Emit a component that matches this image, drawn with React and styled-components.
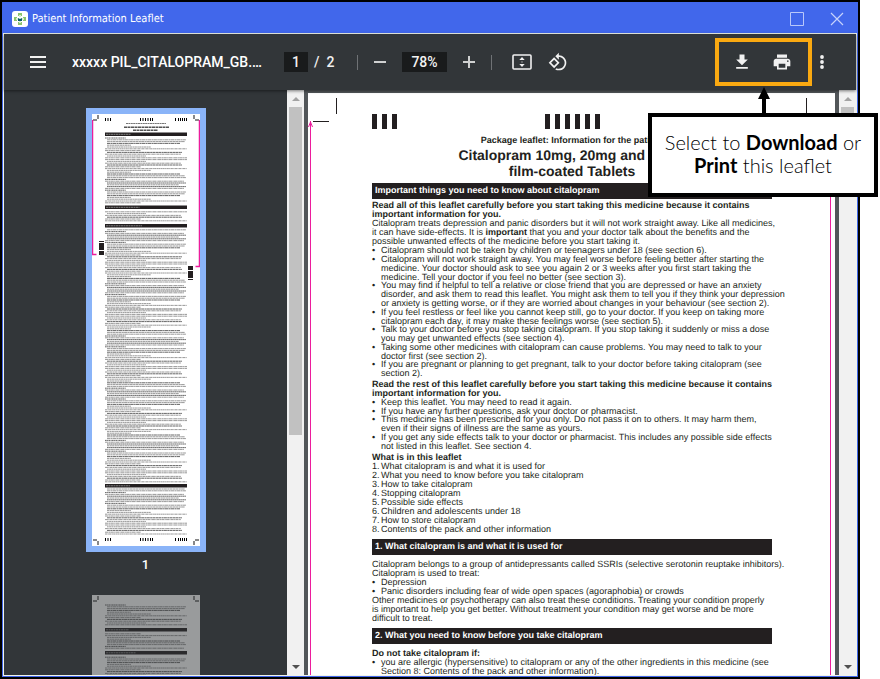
import React from 'react'
import styled, { createGlobalStyle } from 'styled-components'

const colors = {
    frame: '#4167eb',
    toolbar: '#323639',
    field: '#191b1c',
    viewer: '#525659',
    ink: '#231f20',
    pink: '#ec1c9c',
    selected: '#8ab4f8',
    highlight: '#faa911',
}

const GlobalStyle = createGlobalStyle`
    * {
        box-sizing: border-box;
    }
    body {
        margin: 0;
        background: white;
        overflow: hidden;
    }
    button, input {
        font: inherit;
        color: inherit;
    }
`
const Screen = styled.div`
    position: relative;
    padding-right: 20px;
`
const Window = styled.div`
    display: flex;
    flex-direction: column;
    height: 100vh;
    padding: 0 1px 1px;
    border: 2px solid black;
    background: ${colors.frame};
`
const TitleBar = styled.header`
    flex: none;
    display: flex;
    align-items: center;
    gap: 4px;
    height: 31px;
    padding: 2px 10px 0 9px;
    color: white;
    font-family: Tahoma, 'DejaVu Sans Condensed', 'Noto Sans', sans-serif;
`
const WindowTitle = styled.h1`
    flex: 1;
    margin: 0;
    font-size: 11px;
    font-weight: 400;
    line-height: 16px;
    text-rendering: geometricPrecision;
`
const WindowButton = styled.button`
    display: grid;
    place-items: center;
    width: 20px;
    height: 20px;
    margin-left: 16px;
    padding: 0;
    border: 0;
    background: none;
`
const Viewer = styled.div`
    flex: 1;
    min-height: 0;
    display: flex;
    flex-direction: column;
    border: 1px solid #f0f4ea;
    background: ${colors.viewer};
`
const Toolbar = styled.div`
    flex: none;
    display: flex;
    align-items: center;
    height: 56px;
    background: ${colors.toolbar};
    color: #f1f1f1;
    font-family: Roboto, sans-serif;
    font-size: 14px;
    font-weight: 500;
    box-shadow: 0 1px 3px rgba(0, 0, 0, 0.5);
    z-index: 1;
`
const ToolbarStart = styled.div`
    flex: 1;
    min-width: 0;
    display: flex;
    align-items: center;
    gap: 18px;
    padding: 0 16px 0 18px;
`
const FileName = styled.span`
    overflow: hidden;
    white-space: nowrap;
    text-overflow: ellipsis;
    color: white;
`
const ToolbarCenter = styled.div`
    flex: none;
    display: flex;
    align-items: center;
    gap: 6px;
    padding-right: 12px;
`
const ToolbarEnd = styled.div`
    flex: 1;
    display: flex;
    align-items: center;
    justify-content: flex-end;
    padding-right: 24px;
`
const IconButton = styled.button`
    flex: none;
    display: grid;
    place-items: center;
    width: ${(props) => props.$width || 32}px;
    height: 32px;
    padding: 0;
    border: 0;
    background: none;
`
const Field = styled.input`
    width: ${(props) => props.$width}px;
    height: 20px;
    padding: 0;
    border: 0;
    background: ${colors.field};
    text-align: center;
`
const PageCount = styled.span`
    display: flex;
    gap: 7px;
    width: 37px;
`
const Divider = styled.span`
    width: 1px;
    height: 15px;
    background: #6f7275;
`
const FitGroup = styled.div`
    display: flex;
    gap: 4px;
    padding-left: 8px;
`
const HighlightedActions = styled.div`
    display: flex;
    align-items: center;
    height: 48px;
    padding: 0 6px 0 3px;
    border: 4px solid ${colors.highlight};
`
const Panes = styled.div`
    flex: 1;
    min-height: 0;
    display: flex;
`
const Sidebar = styled.nav`
    flex: none;
    display: flex;
    flex-direction: column;
    align-items: center;
    width: 283px;
    padding-top: 18px;
    overflow: hidden;
    background: ${colors.toolbar};
`
const ThumbButton = styled.button`
    flex: none;
    display: block;
    padding: 0;
    border: 6px solid ${(props) => (props.$selected ? colors.selected : 'transparent')};
    background: none;

    svg {
        display: block;
        opacity: ${(props) => (props.$selected ? 1 : 0.5)};
    }
`
const ThumbLabel = styled.span`
    flex: none;
    height: 37px;
    color: white;
    font-family: Roboto, sans-serif;
    font-size: 13px;
    font-weight: 500;
    line-height: 26px;
`
const ScrollTrack = styled.div`
    flex: none;
    display: flex;
    flex-direction: column;
    align-items: center;
    width: 17px;
    background: #f1f1f1;
`
const ScrollArrow = styled.button`
    display: grid;
    place-items: center;
    width: 17px;
    height: 17px;
    padding: 0;
    border: 0;
    background: none;
`
const ScrollThumb = styled.div`
    width: 13px;
    height: ${(props) => props.$size}%;
    margin-bottom: auto;
    background: #c1c1c1;
`
const PageArea = styled.main`
    flex: 1;
    min-width: 0;
    display: flex;
    padding: 3px 4px 0;
    overflow: hidden;
`
const Page = styled.article`
    position: relative;
    flex: 1;
    min-width: 0;
    padding: 21px 63px 0 64px;
    overflow: hidden;
    background: white;
    color: ${colors.ink};
    font-family: 'Liberation Sans', Arial, sans-serif;
    font-size: 9px;
    line-height: 9px;
    white-space: nowrap;
    text-rendering: geometricPrecision;
`
const PrintMarks = styled.svg`
    position: absolute;
    top: 0;
    left: ${(props) => (props.$right ? 'auto' : 0)};
    right: ${(props) => (props.$right ? 0 : 'auto')};
    transform: ${(props) => (props.$right ? 'scaleX(-1)' : 'none')};
`
const BarRow = styled.div`
    display: flex;
    justify-content: space-between;
    height: 15px;
`
const BarGroup = styled.div`
    display: flex;
    gap: 5px;
`
const Bar = styled.span`
    width: 5px;
    background: ${colors.ink};
`
const LeafletHeading = styled.header`
    padding: 5px 0 4px;
    text-align: center;
    font-weight: 700;
`
const LeafletKind = styled.p`
    margin: 0;
    line-height: 13px;
`
const LeafletTitle = styled.h2`
    margin: 0;
    font-size: 14px;
    line-height: 16px;
`
const SectionBar = styled.h3`
    height: 16px;
    margin: 0 0 ${(props) => props.$after}px;
    padding-left: 3px;
    background: ${colors.ink};
    color: white;
    font-size: 9px;
    line-height: 15px;
`
const Section = styled.section`
    margin-bottom: 5px;
`
const Paragraph = styled.p`
    margin: 0;
`
const SubHeading = styled.h4`
    margin: 0;
    font-size: 9px;

    * + & {
        margin-top: 2px;
    }
`
const List = styled.ul`
    margin: 0;
    padding: 0;
    list-style: none;
`
const ListItem = styled.li`
    display: grid;
    grid-template-columns: 9px 1fr;

    ul > &:nth-child(odd):not(:first-child) {
        margin-top: -1px;
    }
`
const Marker = styled.span`
    font-weight: ${(props) => (props.$bullet ? 700 : 400)};
`
const Callout = styled.aside`
    position: absolute;
    top: 113px;
    right: 2px;
    width: 230px;
    height: 84px;
    padding: 14px 0;
    border: 4px solid black;
    background: white;
    color: black;
    font-family: 'Century Gothic', Lato, sans-serif;
    font-size: 20px;
    font-weight: 300;
    line-height: 23px;
    text-align: center;
    z-index: 2;

    b {
        font-weight: 700;
    }
`
const CalloutArrow = styled.svg`
    position: absolute;
    bottom: 100%;
    left: 106px;
`

const advice = [
    ['Citalopram should not be taken by children or teenagers under 18 (see section 6).'],
    [
        'Citalopram will not work straight away. You may feel worse before feeling better after starting the',
        'medicine. Your doctor should ask to see you again 2 or 3 weeks after you first start taking the',
        'medicine. Tell your doctor if you feel no better (see section 3).',
    ],
    [
        'You may find it helpful to tell a relative or close friend that you are depressed or have an anxiety',
        'disorder, and ask them to read this leaflet. You might ask them to tell you if they think your depression',
        'or anxiety is getting worse, or if they are worried about changes in your behaviour (see section 2).',
    ],
    [
        'If you feel restless or feel like you cannot keep still, go to your doctor. If you keep on taking more',
        'citalopram each day, it may make these feelings worse (see section 5).',
    ],
    [
        'Talk to your doctor before you stop taking citalopram. If you stop taking it suddenly or miss a dose',
        'you may get unwanted effects (see section 4).',
    ],
    [
        'Taking some other medicines with citalopram can cause problems. You may need to talk to your',
        'doctor first (see section 2).',
    ],
    [
        'If you are pregnant or planning to get pregnant, talk to your doctor before taking citalopram (see',
        'section 2).',
    ],
]

const reminders = [
    ['Keep this leaflet. You may need to read it again.'],
    ['If you have any further questions, ask your doctor or pharmacist.'],
    [
        'This medicine has been prescribed for you only. Do not pass it on to others. It may harm them,',
        'even if their signs of illness are the same as yours.',
    ],
    [
        'If you get any side effects talk to your doctor or pharmacist. This includes any possible side effects',
        'not listed in this leaflet. See section 4.',
    ],
]

const contents = [
    ['What citalopram is and what it is used for'],
    ['What you need to know before you take citalopram'],
    ['How to take citalopram'],
    ['Stopping citalopram'],
    ['Possible side effects'],
    ['Children and adolescents under 18'],
    ['How to store citalopram'],
    ['Contents of the pack and other information'],
]

const uses = [
    ['Depression'],
    ['Panic disorders including fear of wide open spaces (agoraphobia) or crowds'],
]

const warnings = [
    [
        'you are allergic (hypersensitive) to citalopram or any of the other ingredients in this medicine (see',
        'Section 8: Contents of the pack and other information).',
    ],
]

function Lines({ lines }) {
    return lines.map((line, index) => (
        <React.Fragment key={line}>
            {index > 0 && <br />}
            {line}
        </React.Fragment>
    ))
}

function LeafletList({ items, ordered }) {
    return (
        <List as={ordered ? 'ol' : 'ul'}>
            {items.map((lines, index) => (
                <ListItem key={lines[0]}>
                    <Marker $bullet={!ordered}>{ordered ? `${index + 1}.` : '•'}</Marker>
                    <span>
                        <Lines lines={lines} />
                    </span>
                </ListItem>
            ))}
        </List>
    )
}

function Bars({ count }) {
    return (
        <BarGroup>
            {Array.from({ length: count }, (_, index) => (
                <Bar key={index} />
            ))}
        </BarGroup>
    )
}

function Marks({ right }) {
    return (
        <PrintMarks $right={right} width="40" height="600" aria-hidden="true">
            <path d="M28.5 5v16M5 28.5h16" stroke={colors.ink} fill="none" />
            <path
                d={right ? 'M4.5 28v572' : 'M2.5 28v572M.5 34l2-5 2 5'}
                stroke={colors.pink}
                fill="none"
            />
        </PrintMarks>
    )
}

function Scrollbar({ size, label }) {
    return (
        <ScrollTrack>
            <ScrollArrow aria-label={`Scroll ${label} up`}>
                <svg width="8" height="4">
                    <path d="M0 4l4-4 4 4z" fill="#a3a3a3" />
                </svg>
            </ScrollArrow>
            <ScrollThumb $size={size} />
            <ScrollArrow aria-label={`Scroll ${label} down`}>
                <svg width="8" height="4">
                    <path d="M0 0l4 4 4-4z" fill="#505050" />
                </svg>
            </ScrollArrow>
        </ScrollTrack>
    )
}

// Miniature of a leaflet page: body copy as dashed strokes, section bars in black
function Thumbnail({ bars, marks, start }) {
    const rows = []
    for (let row = 0; start + row * 1.8 < 421; row++) {
        const y = start + row * 1.8
        if (bars.some((bar) => y > bar - 2 && y < bar + 5)) continue
        const seed = (row * 37 + row * row * 11) % 29
        const short = seed % 5 === 0
        const indent = seed % 3 === 0 ? 0 : 2
        rows.push(
            <line
                key={row}
                x1={13 + indent}
                x2={short ? 34 + seed : 95 - (seed % 9)}
                y1={y}
                y2={y}
                stroke={seed % 7 === 0 ? '#555' : '#8c8c8c'}
                strokeWidth=".9"
                strokeDasharray={`${1.7 + (seed % 4) * 0.6} .4 ${1.1 + (seed % 3) * 0.5} .3`}
            />
        )
    }
    const groups = [13, 15.5, 18, 48, 50.5, 53, 55.5, 58, 60, 83, 86, 88, 90, 92, 94]

    return (
        <svg width="108" height="432" viewBox="0 0 108 432" aria-hidden="true">
            <rect width="108" height="432" fill="white" />
            {rows}
            {bars.map((y) => (
                <g key={y}>
                    <rect x="13" y={y} width="82" height="3.5" fill={colors.ink} />
                    <path d={`M14 ${y + 1.8}h${22 + (y % 16)}`} stroke="#999" strokeWidth=".8" strokeDasharray="2 .5" />
                </g>
            ))}
            <path
                d="M6 1v4M1 6h4M102 1v4M103 6h4M6 431v-4M1 426h4M102 431v-4M103 426h4"
                stroke="#888"
                strokeWidth="2"
            />
            {marks && (
                <>
                    <path d="M34 9.500h40" stroke="#777" strokeDasharray="2 .4" />
                    <path d="M32 13.300h45M41 16.300h25" stroke="#555" strokeWidth="1.600" strokeDasharray="3 .5" />
                    {groups.map((x) => (
                        <rect key={x} x={x} y="4" width="1" height="3" fill="black" />
                    ))}
                    {groups.map((x) => (
                        <rect key={x} x={x} y="424" width="1" height="3" fill="black" />
                    ))}
                    <path d="M7 127h5v1H7zM7 129h5v7H7zM7 137h5v4H7z" fill={colors.ink} />
                    <path d="M96 152h5v4h-5zM96 157h5v7h-5zM96 165h5v1h-5z" fill={colors.ink} />
                    <path d="M.5 6v134.500h4M107.500 6v146.500h-4" stroke={colors.pink} strokeWidth="1.500" fill="none" />
                </>
            )}
        </svg>
    )
}

function Logo() {
    return (
        <svg width="16" height="16" viewBox="0 0 16 16" aria-hidden="true">
            <rect width="16" height="16" rx="3" fill="white" />
            <path d="M6 2h4v3H6zM6 11h4v3H6zM2 6h3v4H2zM11 6h3v4h-3z" fill="#8cc56f" />
            <path d="M7 4h2v2H7zM7 10h2v2H7zM4 7h2v2H4zM10 7h2v2h-2z" fill="#d9edcf" />
            <path d="M6 7l2 1 2-1v3H6z" fill="#0b5c66" />
        </svg>
    )
}

function App() {
    return (
        <Screen>
            <GlobalStyle />
            <Window>
                <TitleBar>
                    <Logo />
                    <WindowTitle>Patient Information Leaflet</WindowTitle>
                    <WindowButton aria-label="Maximise">
                        <svg width="14" height="14" fill="none" stroke="#b9c8fa">
                            <path d="M.5.5h13v13H.5z" />
                        </svg>
                    </WindowButton>
                    <WindowButton aria-label="Close">
                        <svg width="14" height="14" fill="none" stroke="#c6d2fb" strokeWidth="1.200">
                            <path d="M1 1l12 12M13 1L1 13" />
                        </svg>
                    </WindowButton>
                </TitleBar>
                <Viewer>
                    <Toolbar>
                        <ToolbarStart>
                            <IconButton aria-label="Menu">
                                <svg width="16" height="12" fill="#f1f1f1">
                                    <path d="M0 0h16v2H0zM0 5h16v2H0zM0 10h16v2H0z" />
                                </svg>
                            </IconButton>
                            <FileName>xxxxx PIL_CITALOPRAM_GB.…</FileName>
                        </ToolbarStart>
                        <ToolbarCenter>
                            <Field $width={24} aria-label="Page number" defaultValue="1" />
                            <PageCount>
                                <span>/</span>
                                <span>2</span>
                            </PageCount>
                            <Divider />
                            <IconButton aria-label="Zoom out">
                                <svg width="12" height="2" fill="#d0d1d1">
                                    <path d="M0 0h12v2H0z" />
                                </svg>
                            </IconButton>
                            <Field $width={45} aria-label="Zoom level" defaultValue="78%" />
                            <IconButton aria-label="Zoom in">
                                <svg width="12" height="12" fill="#d0d1d1">
                                    <path d="M5 0h2v5h5v2H7v5H5V7H0V5h5z" />
                                </svg>
                            </IconButton>
                            <Divider />
                            <FitGroup>
                                <IconButton aria-label="Fit to page">
                                    <svg width="20" height="16" viewBox="0 0 20 16" fill="#f1f1f1">
                                        <rect x="1" y="1" width="18" height="14" rx="1" fill="none" stroke="#f1f1f1" strokeWidth="1.600" />
                                        <path d="M10 3l2.700 3H7.300zM10 13l2.700-3H7.300zM9.500 7.500h1v1h-1z" />
                                    </svg>
                                </IconButton>
                                <IconButton aria-label="Rotate counterclockwise">
                                    <svg width="20" height="20" viewBox="0 0 24 24" fill="#f1f1f1">
                                        <path d="M7.340 6.410L.860 12.900l6.490 6.480 6.490-6.480-6.500-6.490zM3.690 12.900l3.660-3.660L11 12.900l-3.660 3.660-3.650-3.660zm15.670-6.260C17.610 4.880 15.300 4 13 4V.760L8.760 5 13 9.240V6c1.790 0 3.580.680 4.950 2.050 2.730 2.730 2.730 7.170 0 9.900C16.580 19.320 14.790 20 13 20c-.970 0-1.940-.210-2.840-.610l-1.490 1.490C10.020 21.620 11.510 22 13 22c2.300 0 4.610-.880 6.360-2.640 3.520-3.510 3.520-9.210 0-12.720z" />
                                    </svg>
                                </IconButton>
                            </FitGroup>
                        </ToolbarCenter>
                        <ToolbarEnd>
                            <HighlightedActions>
                                <IconButton $width={40} aria-label="Download">
                                    <svg width="20" height="20" viewBox="0 0 24 24" fill="#f1f1f1">
                                        <path d="M19 9h-4V3H9v6H5l7 7 7-7zM5 18v2h14v-2H5z" />
                                    </svg>
                                </IconButton>
                                <IconButton $width={40} aria-label="Print">
                                    <svg width="20" height="20" viewBox="0 0 24 24" fill="#f1f1f1">
                                        <path d="M19 8H5c-1.660 0-3 1.340-3 3v6h4v4h12v-4h4v-6c0-1.660-1.340-3-3-3zm-3 11H8v-5h8v5zm3-7c-.550 0-1-.450-1-1s.450-1 1-1 1 .450 1 1-.450 1-1 1zm-1-9H6v4h12V3z" />
                                    </svg>
                                </IconButton>
                            </HighlightedActions>
                            <IconButton $width={20} aria-label="More actions">
                                <svg width="4" height="16" fill="#f1f1f1">
                                    <circle cx="2" cy="3" r="1.900" />
                                    <circle cx="2" cy="8" r="1.900" />
                                    <circle cx="2" cy="13" r="1.900" />
                                </svg>
                            </IconButton>
                        </ToolbarEnd>
                    </Toolbar>
                    <Panes>
                        <Sidebar aria-label="Pages">
                            <ThumbButton $selected aria-label="Page 1">
                                <Thumbnail bars={[18.5, 91.5, 110, 370]} start={24} marks />
                            </ThumbButton>
                            <ThumbLabel>1</ThumbLabel>
                            <ThumbButton aria-label="Page 2">
                                <Thumbnail bars={[33, 56]} start={10} />
                            </ThumbButton>
                        </Sidebar>
                        <Scrollbar size={56} label="pages" />
                        <PageArea>
                            <Page>
                                <Marks />
                                <Marks right />
                                <BarRow>
                                    <Bars count={3} />
                                    <Bars count={6} />
                                    <Bars count={3} />
                                </BarRow>
                                <LeafletHeading>
                                    <LeafletKind>Package leaflet: Information for the patient</LeafletKind>
                                    <LeafletTitle>
                                        Citalopram 10mg, 20mg and 40mg
                                        <br />
                                        film-coated Tablets
                                    </LeafletTitle>
                                </LeafletHeading>
                                <Section>
                                    <SectionBar $after={2}>Important things you need to know about citalopram</SectionBar>
                                    <Paragraph>
                                        <b>
                                            Read all of this leaflet carefully before you start taking this medicine because it contains
                                            <br />
                                            important information for you.
                                        </b>
                                        <br />
                                        Citalopram treats depression and panic disorders but it will not work straight away. Like all medicines,
                                        <br />
                                        it can have side-effects. It is <b>important</b> that you and your doctor talk about the benefits and the
                                        <br />
                                        possible unwanted effects of the medicine before you start taking it.
                                    </Paragraph>
                                    <LeafletList items={advice} />
                                    <SubHeading>
                                        Read the rest of this leaflet carefully before you start taking this medicine because it contains
                                        <br />
                                        important information for you.
                                    </SubHeading>
                                    <LeafletList items={reminders} />
                                    <SubHeading>What is in this leaflet</SubHeading>
                                    <LeafletList items={contents} ordered />
                                </Section>
                                <Section>
                                    <SectionBar $after={5}>1. What citalopram is and what it is used for</SectionBar>
                                    <Paragraph>
                                        Citalopram belongs to a group of antidepressants called SSRIs (selective serotonin reuptake inhibitors).
                                        <br />
                                        Citalopram is used to treat:
                                    </Paragraph>
                                    <LeafletList items={uses} />
                                    <Paragraph>
                                        Other medicines or psychotherapy can also treat these conditions. Treating your condition properly
                                        <br />
                                        is important to help you get better. Without treatment your condition may get worse and be more
                                        <br />
                                        difficult to treat.
                                    </Paragraph>
                                </Section>
                                <Section>
                                    <SectionBar $after={5}>2. What you need to know before you take citalopram</SectionBar>
                                    <SubHeading>Do not take citalopram if:</SubHeading>
                                    <LeafletList items={warnings} />
                                </Section>
                            </Page>
                        </PageArea>
                        <Scrollbar size={8} label="document" />
                    </Panes>
                </Viewer>
            </Window>
            <Callout>
                <CalloutArrow width="12" height="30" viewBox="0 0 12 30">
                    <path d="M6 0l6 12H8v18H4V12H0z" />
                </CalloutArrow>
                Select to <b>Download</b> or
                <br />
                <b>Print</b> this leaflet
            </Callout>
        </Screen>
    )
}

export default App
